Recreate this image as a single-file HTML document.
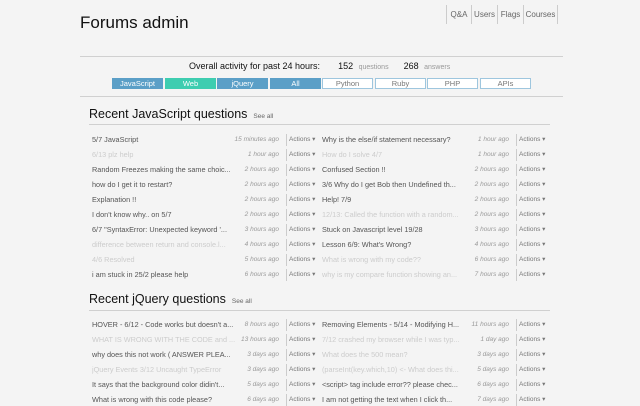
<!DOCTYPE html>
<html><head><meta charset="utf-8"><style>
*{margin:0;padding:0;box-sizing:border-box}
body{width:640px;height:400px;overflow:hidden;background:#f4f4f4;font-family:"Liberation Sans",sans-serif;position:relative;color:#555}
.a{position:absolute;white-space:nowrap}
h1{position:absolute;left:80px;top:13px;font-size:17px;font-weight:normal;color:#111}
.nav{position:absolute;top:5px;height:19px;border-left:1px solid #ccc;font-size:8px;color:#666;line-height:19px;text-align:center}
.hr{position:absolute;height:1px;background:#d0d0d0}
.btn{position:absolute;top:78px;height:11px;width:51px;font-size:7.5px;line-height:11px;text-align:center;color:#fff;background:#5b9fc7}
.btn.o{background:#fff;border:1px solid #9ec6de;color:#777;line-height:9px}
h2{position:absolute;left:89px;font-size:12.5px;font-weight:normal;color:#111;white-space:nowrap}
h2 small{font-size:6.5px;color:#666;margin-left:6px}
.r{position:absolute;height:12px;width:230px;font-size:7.3px;line-height:12px;white-space:nowrap}
.r span{white-space:nowrap}
.t{position:absolute;left:0;width:157px;overflow:hidden;color:#555}
.f .t{color:#ccc}
.d{position:absolute;left:120px;width:67px;text-align:right;font-style:italic;color:#999;font-size:6.5px}
.s{position:absolute;left:194px;top:0;width:1px;height:12px;background:#ccc}
.ac{position:absolute;left:197px;color:#777;font-size:6.5px}
</style></head><body>
<h1>Forums admin</h1>
<div class="nav" style="left:446px;width:25px">Q&amp;A</div>
<div class="nav" style="left:471px;width:26px">Users</div>
<div class="nav" style="left:497px;width:26px">Flags</div>
<div class="nav" style="left:523px;width:35px;border-right:1px solid #ccc">Courses</div>
<div class="hr" style="left:80px;top:56px;width:483px"></div>
<div class="a" style="left:189px;top:61px;font-size:9px;color:#111">Overall activity for past 24 hours:<span style="margin-left:18px">152</span> <span style="font-size:7px;color:#999;margin-left:3px">questions</span><span style="margin-left:15px">268</span> <span style="font-size:7px;color:#999;margin-left:3px">answers</span></div>
<div class="btn" style="left:112px">JavaScript</div>
<div class="btn" style="left:165px;background:#3ecdb0">Web</div>
<div class="btn" style="left:217px">jQuery</div>
<div class="btn" style="left:270px">All</div>
<div class="btn o" style="left:322px">Python</div>
<div class="btn o" style="left:375px">Ruby</div>
<div class="btn o" style="left:427px">PHP</div>
<div class="btn o" style="left:480px">APIs</div>
<div class="hr" style="left:80px;top:96px;width:483px"></div>

<h2 style="top:107px">Recent JavaScript questions<small>See all</small></h2>
<div class="hr" style="left:89px;top:124px;width:461px"></div>

<div class="r" style="left:92px;top:134px"><span class="t">5/7 JavaScript</span><span class="d">15 minutes ago</span><span class="s"></span><span class="ac">Actions ▾</span></div>
<div class="r f" style="left:92px;top:149px"><span class="t">6/13 plz help</span><span class="d">1 hour ago</span><span class="s"></span><span class="ac">Actions ▾</span></div>
<div class="r" style="left:92px;top:164px"><span class="t">Random Freezes making the same choic...</span><span class="d">2 hours ago</span><span class="s"></span><span class="ac">Actions ▾</span></div>
<div class="r" style="left:92px;top:179px"><span class="t">how do I get it to restart?</span><span class="d">2 hours ago</span><span class="s"></span><span class="ac">Actions ▾</span></div>
<div class="r" style="left:92px;top:194px"><span class="t">Explanation !!</span><span class="d">2 hours ago</span><span class="s"></span><span class="ac">Actions ▾</span></div>
<div class="r" style="left:92px;top:209px"><span class="t">I don't know why.. on 5/7</span><span class="d">2 hours ago</span><span class="s"></span><span class="ac">Actions ▾</span></div>
<div class="r" style="left:92px;top:224px"><span class="t">6/7 "SyntaxError: Unexpected keyword '...</span><span class="d">3 hours ago</span><span class="s"></span><span class="ac">Actions ▾</span></div>
<div class="r f" style="left:92px;top:239px"><span class="t">difference between return and console.l...</span><span class="d">4 hours ago</span><span class="s"></span><span class="ac">Actions ▾</span></div>
<div class="r f" style="left:92px;top:254px"><span class="t">4/6 Resolved</span><span class="d">5 hours ago</span><span class="s"></span><span class="ac">Actions ▾</span></div>
<div class="r" style="left:92px;top:269px"><span class="t">i am stuck in 25/2 please help</span><span class="d">6 hours ago</span><span class="s"></span><span class="ac">Actions ▾</span></div>

<div class="r" style="left:322px;top:134px"><span class="t">Why is the else/if statement necessary?</span><span class="d">1 hour ago</span><span class="s"></span><span class="ac">Actions ▾</span></div>
<div class="r f" style="left:322px;top:149px"><span class="t">How do I solve 4/7</span><span class="d">1 hour ago</span><span class="s"></span><span class="ac">Actions ▾</span></div>
<div class="r" style="left:322px;top:164px"><span class="t">Confused Section !!</span><span class="d">2 hours ago</span><span class="s"></span><span class="ac">Actions ▾</span></div>
<div class="r" style="left:322px;top:179px"><span class="t">3/6 Why do I get Bob then Undefined th...</span><span class="d">2 hours ago</span><span class="s"></span><span class="ac">Actions ▾</span></div>
<div class="r" style="left:322px;top:194px"><span class="t">Help! 7/9</span><span class="d">2 hours ago</span><span class="s"></span><span class="ac">Actions ▾</span></div>
<div class="r f" style="left:322px;top:209px"><span class="t">12/13: Called the function with a random...</span><span class="d">2 hours ago</span><span class="s"></span><span class="ac">Actions ▾</span></div>
<div class="r" style="left:322px;top:224px"><span class="t">Stuck on Javascript level 19/28</span><span class="d">3 hours ago</span><span class="s"></span><span class="ac">Actions ▾</span></div>
<div class="r" style="left:322px;top:239px"><span class="t">Lesson 6/9: What's Wrong?</span><span class="d">4 hours ago</span><span class="s"></span><span class="ac">Actions ▾</span></div>
<div class="r f" style="left:322px;top:254px"><span class="t">What is wrong with my code??</span><span class="d">6 hours ago</span><span class="s"></span><span class="ac">Actions ▾</span></div>
<div class="r f" style="left:322px;top:269px"><span class="t">why is my compare function showing an...</span><span class="d">7 hours ago</span><span class="s"></span><span class="ac">Actions ▾</span></div>

<h2 style="top:292px">Recent jQuery questions<small>See all</small></h2>
<div class="hr" style="left:89px;top:310px;width:461px"></div>

<div class="r" style="left:92px;top:319px"><span class="t">HOVER - 6/12 - Code works but doesn't a...</span><span class="d">8 hours ago</span><span class="s"></span><span class="ac">Actions ▾</span></div>
<div class="r f" style="left:92px;top:334px"><span class="t">WHAT IS WRONG WITH THE CODE and ...</span><span class="d">13 hours ago</span><span class="s"></span><span class="ac">Actions ▾</span></div>
<div class="r" style="left:92px;top:349px"><span class="t">why does this not work ( ANSWER PLEA...</span><span class="d">3 days ago</span><span class="s"></span><span class="ac">Actions ▾</span></div>
<div class="r f" style="left:92px;top:364px"><span class="t">jQuery Events 3/12 Uncaught TypeError</span><span class="d">3 days ago</span><span class="s"></span><span class="ac">Actions ▾</span></div>
<div class="r" style="left:92px;top:379px"><span class="t">It says that the background color didin't...</span><span class="d">5 days ago</span><span class="s"></span><span class="ac">Actions ▾</span></div>
<div class="r" style="left:92px;top:394px"><span class="t">What is wrong with this code please?</span><span class="d">6 days ago</span><span class="s"></span><span class="ac">Actions ▾</span></div>

<div class="r" style="left:322px;top:319px"><span class="t">Removing Elements - 5/14 - Modifying H...</span><span class="d">11 hours ago</span><span class="s"></span><span class="ac">Actions ▾</span></div>
<div class="r f" style="left:322px;top:334px"><span class="t">7/12 crashed my browser while I was typ...</span><span class="d">1 day ago</span><span class="s"></span><span class="ac">Actions ▾</span></div>
<div class="r f" style="left:322px;top:349px"><span class="t">What does the 500 mean?</span><span class="d">3 days ago</span><span class="s"></span><span class="ac">Actions ▾</span></div>
<div class="r f" style="left:322px;top:364px"><span class="t">(parseInt(key.which,10) &lt;- What does thi...</span><span class="d">5 days ago</span><span class="s"></span><span class="ac">Actions ▾</span></div>
<div class="r" style="left:322px;top:379px"><span class="t">&lt;script&gt; tag include error?? please chec...</span><span class="d">6 days ago</span><span class="s"></span><span class="ac">Actions ▾</span></div>
<div class="r" style="left:322px;top:394px"><span class="t">I am not getting the text when I click th...</span><span class="d">7 days ago</span><span class="s"></span><span class="ac">Actions ▾</span></div>
</body></html>
